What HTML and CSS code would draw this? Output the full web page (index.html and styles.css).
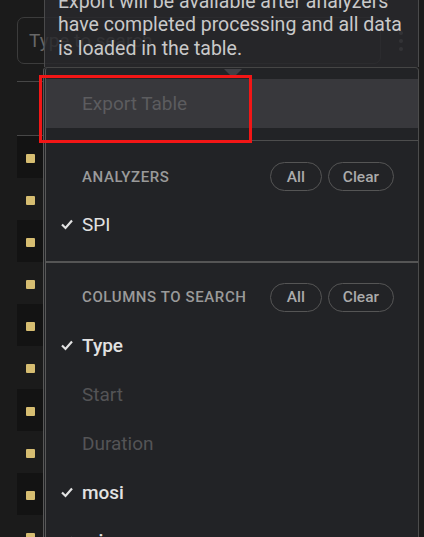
FILE: index.html
```html
<!DOCTYPE html>
<html>
<head>
<meta charset="utf-8">
<link rel="stylesheet" href="styles.css">
</head>
<body>
<div class="page">
  <div class="toolbar">
    <div class="search">Type to search</div>
    <div class="kebab"><span></span><span></span><span></span></div>
  </div>
  <div class="table">
    <div class="col">
      <div class="head"></div>
      <div class="row dark"><i></i></div>
      <div class="row"><i></i></div>
      <div class="row dark"><i></i></div>
      <div class="row"><i></i></div>
      <div class="row dark"><i></i></div>
      <div class="row"><i></i></div>
      <div class="row dark"><i></i></div>
      <div class="row"><i></i></div>
      <div class="row dark"><i></i></div>
      <div class="row"><i></i></div>
    </div>
  </div>

  <div class="overlay">
    <div class="tooltip">
      <div class="tip-line">Export will be available after analyzers</div>
      <div class="tip-line">have completed processing and all data</div>
      <div class="tip-line">is loaded in the table.</div>
    </div>
    <div class="menu">
      <div class="arrow"></div>
      <div class="block">
        <div class="item export"><span class="check"></span><span class="label">Export Table</span></div>
      </div>
      <div class="block sep">
        <div class="head-row">
          <span class="title">ANALYZERS</span>
          <span class="btns"><span class="pill">All</span><span class="pill">Clear</span></span>
        </div>
        <div class="item on"><svg class="check" viewBox="0 0 12 12"><polyline points="1,6.5 4.5,10 11,2.5"/></svg><span class="label">SPI</span></div>
      </div>
      <div class="block sep thick">
        <div class="head-row">
          <span class="title">COLUMNS TO SEARCH</span>
          <span class="btns"><span class="pill">All</span><span class="pill">Clear</span></span>
        </div>
        <div class="item on bold"><svg class="check" viewBox="0 0 12 12"><polyline points="1,6.5 4.5,10 11,2.5"/></svg><span class="label">Type</span></div>
        <div class="item off"><span class="check"></span><span class="label">Start</span></div>
        <div class="item off"><span class="check"></span><span class="label">Duration</span></div>
        <div class="item on bold"><svg class="check" viewBox="0 0 12 12"><polyline points="1,6.5 4.5,10 11,2.5"/></svg><span class="label">mosi</span></div>
        <div class="item on bold"><svg class="check" viewBox="0 0 12 12"><polyline points="1,6.5 4.5,10 11,2.5"/></svg><span class="label">miso</span></div>
      </div>
    </div>
  </div>

  <div class="callout"></div>
</div>
</body>
</html>
```

FILE: styles.css
```css
* { box-sizing: border-box; }
html, body { margin: 0; padding: 0; }
body {
  background: #1b1b1b;
  font-family: Roboto, "Noto Sans", sans-serif;
  width: 424px;
  height: 537px;
  overflow: hidden;
}
.page { position: relative; width: 424px; height: 537px; overflow: hidden; }

.toolbar {
  display: flex;
  align-items: center;
  padding: 17px 0 0 17px;
}
.search {
  width: 364px;
  height: 47px;
  border: 1px solid #3c3c3c;
  border-radius: 7px;
  color: #676767;
  font-size: 19px;
  padding-left: 11px;
  display: flex;
  align-items: center;
}
.kebab {
  display: flex;
  flex-direction: column;
  gap: 4px;
  margin-left: 18px;
}
.kebab span {
  width: 4px; height: 4px; border-radius: 50%;
  background: #6a6a6a;
}

.table { margin-top: 17px; padding-left: 17px; }
.col { width: 26px; }
.head {
  height: 55px;
  border-top: 1px solid #474747;
  border-bottom: 1px solid #474747;
}
.row { height: 42.1px; padding: 18px 0 0 9px; }
.row.dark { background: #131313; }
.row i {
  display: block; width: 9px; height: 9px;
  background: #d6bd71; border-radius: 1px;
}

.overlay {
  position: absolute;
  left: 43px;
  top: 0;
  width: 376px;
  display: flex;
  flex-direction: column;
}
.tooltip {
  height: 67px;
  display: flex;
  flex-direction: column;
  justify-content: flex-end;
  padding: 0 0 7px 13px;
  background: rgba(40, 41, 44, 0.84);
  border-left: 1px solid rgba(90,90,90,0.7);
  border-right: 1px solid rgba(90,90,90,0.7);
  margin-left: 1px;
  color: #c9c9c9;
  font-size: 19.5px;
  line-height: 23.3px;
  white-space: nowrap;
}
.menu {
  position: relative;
  background: #222326;
  border-left: 3px double #585858;
  border-right: 1px solid #4c4c4c;
  border-top: 1px solid #454545;
  border-radius: 4px 4px 0 0;
  height: 480px;
  padding-top: 11px;
}
.arrow {
  position: absolute;
  left: 178px;
  top: 1px;
  width: 0; height: 0;
  border-left: 9px solid transparent;
  border-right: 9px solid transparent;
  border-top: 9px solid #414146;
}
.block { padding-bottom: 12px; }
.block.sep { border-top: 1px solid #4d4d4d; padding-top: 21px; padding-bottom: 12px; }
.block.thick { border-top: 2px solid #555; padding-top: 20px; }

.item {
  display: flex;
  align-items: center;
  height: 48.9px;
  padding-left: 15px;
  font-size: 19px;
}
.item .check { width: 12px; height: 12px; margin-right: 9px; flex: none; }
svg.check polyline { fill: none; stroke: #e2e2e2; stroke-width: 2.2; }
.item.export { background: #38383c; height: 49px; color: #5c5c5f; }
.item.on { color: #e2e2e2; }
.item.bold { font-weight: 500; }
.item.off { color: #545456; }

.head-row {
  display: flex;
  align-items: center;
  justify-content: space-between;
  padding: 0 24px 0 36px;
  margin-bottom: 9px;
}
.title {
  color: #9a9a9a;
  font-size: 15px;
  font-weight: 500;
  letter-spacing: 0.6px;
}
.btns { display: flex; gap: 6px; }
.pill {
  height: 29px;
  min-width: 52px;
  border: 1px solid #555;
  border-radius: 15px;
  color: #ababab;
  font-size: 15.5px;
  font-weight: 500;
  display: flex;
  align-items: center;
  justify-content: center;
  padding: 0 14px;
}

.callout {
  position: absolute;
  left: 39px;
  top: 75px;
  width: 213px;
  height: 68px;
  border: 3.5px solid #f21616;
}
```
